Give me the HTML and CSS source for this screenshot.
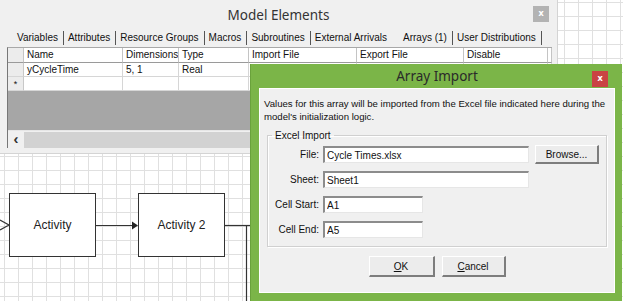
FILE: index.html
```html
<!DOCTYPE html>
<html>
<head>
<meta charset="utf-8">
<link rel="stylesheet" href="styles.css">
<title>Model Elements - Array Import</title>
</head>
<body>
<div class="desk">

  <!-- flowchart behind the windows -->
  <svg class="flow" width="623" height="301" viewBox="0 0 623 301">
    <path d="M0 220 L9 225 L0 230" fill="none" stroke="#333" stroke-width="1.2"/>
    <line x1="96" y1="225.5" x2="133" y2="225.5" stroke="#333" stroke-width="1.2"/>
    <polygon points="132,221.5 138,225.5 132,229.5" fill="#222"/>
    <line x1="224" y1="225.5" x2="250" y2="225.5" stroke="#333" stroke-width="1.2"/>
    <line x1="246.5" y1="225" x2="246.5" y2="301" stroke="#333" stroke-width="1.2"/>
  </svg>
  <div class="node node-a">Activity</div>
  <div class="node node-b">Activity 2</div>

  <!-- Model Elements window -->
  <section class="win model">
    <header class="win-title">
      <span>Model Elements</span>
      <span class="close-btn grey">x</span>
    </header>
    <nav class="tabs">
      <span class="tab">Variables</span><span class="sep"></span>
      <span class="tab">Attributes</span><span class="sep"></span>
      <span class="tab">Resource Groups</span><span class="sep"></span>
      <span class="tab">Macros</span><span class="sep"></span>
      <span class="tab">Subroutines</span><span class="sep"></span>
      <span class="tab">External Arrivals</span>
      <span class="tab active">Arrays (1)</span><span class="sep"></span>
      <span class="tab">User Distributions</span><span class="sep"></span>
    </nav>
    <div class="table">
      <div class="row head">
        <span class="rh"></span><span>Name</span><span>Dimensions</span><span>Type</span><span>Import File</span><span>Export File</span><span>Disable</span><span></span>
      </div>
      <div class="row">
        <span class="rh"></span><span>yCycleTime</span><span>5, 1</span><span>Real</span><span></span><span></span><span></span><span></span>
      </div>
      <div class="row">
        <span class="rh">*</span><span></span><span></span><span></span><span></span><span></span><span></span><span></span>
      </div>
      <div class="table-empty"></div>
      <div class="hscroll">
        <span class="scroll-btn">&lsaquo;</span>
        <span class="scroll-track"></span>
      </div>
    </div>
  </section>

  <!-- Array Import dialog -->
  <section class="dlg">
    <header class="dlg-title">
      <span>Array Import</span>
      <span class="close-btn red">x</span>
    </header>
    <div class="dlg-body">
      <p class="intro">Values for this array will be imported from the Excel file indicated here during the model's initialization logic.</p>
      <fieldset class="group">
        <legend>Excel Import</legend>
        <div class="fields">
          <label>File:</label>
          <input class="wide" type="text" value="Cycle Times.xlsx" readonly>
          <button class="btn browse">Browse...</button>

          <label>Sheet:</label>
          <input class="wide" type="text" value="Sheet1" readonly>
          <span></span>

          <label>Cell Start:</label>
          <input class="short" type="text" value="A1" readonly>
          <span></span>

          <label>Cell End:</label>
          <input class="short" type="text" value="A5" readonly>
          <span></span>
        </div>
      </fieldset>
      <div class="actions">
        <button class="btn main"><u>O</u>K</button>
        <button class="btn main"><u>C</u>ancel</button>
      </div>
    </div>
  </section>

</div>
</body>
</html>
```

FILE: styles.css
```css
html, body {
  margin: 0;
  padding: 0;
}

body {
  font-family: "Liberation Sans", Arial, sans-serif;
  font-size: 10px;
  color: #111;
}

.desk {
  position: relative;
  width: 623px;
  height: 301px;
  overflow: hidden;
  background-color: #fff;
  background-image:
    linear-gradient(to right, #e0e0e0 1px, transparent 1px),
    linear-gradient(to bottom, #e0e0e0 1px, transparent 1px);
  background-size: 14px 14px;
  background-position: 4px 2px;
}

/* flowchart */
.flow {
  position: absolute;
  left: 0;
  top: 0;
}

.node {
  position: absolute;
  top: 193px;
  width: 85px;
  height: 62px;
  border: 1px solid #333;
  background: #fff;
  display: flex;
  align-items: center;
  justify-content: center;
  font-size: 12px;
  color: #222;
}

.node-a { left: 9px; }
.node-b { left: 138px; }

/* shared window bits */
.close-btn {
  position: absolute;
  width: 16px;
  height: 16px;
  line-height: 14px;
  text-align: center;
  color: #fff;
  font-size: 9px;
  font-weight: bold;
}

.close-btn.grey { background: #b3b3b3; right: 8px; top: 6px; }
.close-btn.red { background: #c94343; right: 7px; top: 7px; }

/* Model Elements */
.win.model {
  position: absolute;
  left: 0;
  top: 0;
  width: 557px;
  height: 153px;
  background: #f0f0f0;
  border-right: 1px solid #d4d4d4;
  border-bottom: 1px solid #d4d4d4;
}

.win-title {
  position: relative;
  height: 29px;
  display: flex;
  align-items: center;
  justify-content: center;
  font-family: "Noto Sans", sans-serif;
  font-size: 13.5px;
  color: #333;
}

.tabs {
  display: flex;
  align-items: center;
  height: 18px;
  padding-left: 13px;
  white-space: nowrap;
}

.tab {
  flex-shrink: 0;
  padding: 0 5px 0 4px;
  font-size: 10px;
  line-height: 18px;
}

.tab.active {
  padding: 0 5px 0 11px;
}

.sep {
  flex-shrink: 0;
  width: 1px;
  height: 14px;
  background: #555;
}

.table {
  margin-left: 7px;
  width: 543px;
  height: 100px;
  border-left: 1px solid #777;
  border-top: 1px solid #a8a8a8;
  border-right: 1px solid #a8a8a8;
  display: flex;
  flex-direction: column;
}

.row {
  display: grid;
  grid-template-columns: 16px 99px 56px 70px 108px 107px 84px 1fr;
  height: 14px;
  background: #fff;
}

.row > span {
  border-right: 1px solid #d6d6d6;
  border-bottom: 1px solid #d6d6d6;
  padding-left: 3px;
  line-height: 14px;
  white-space: nowrap;
  overflow: hidden;
}

.row.head {
  height: 15px;
  background: #fff;
}

.row.head > span {
  border-bottom-color: #9a9a9a;
  border-right-color: #c4c4c4;
  line-height: 14px;
}

.row > .rh {
  background: #ececec;
  border-right-color: #c8c8c8;
  padding-left: 0;
  text-align: center;
  font-size: 9px;
}

.table-empty {
  height: 39px;
  background: #a6a6a6;
  border-bottom: 1px solid #e6e6e6;
}

.hscroll {
  display: flex;
  height: 16px;
  background: #f0f0f0;
  padding-top: 1px;
}

.scroll-btn {
  width: 16px;
  text-align: center;
  font-size: 15px;
  line-height: 13px;
  font-weight: bold;
  color: #333;
}

.scroll-track {
  flex: 1;
  background: #d2d2d2;
}

/* Array Import dialog */
.dlg {
  position: absolute;
  left: 250px;
  top: 64px;
  width: 372px;
  height: 237px;
  background: #7bb548;
  display: flex;
  flex-direction: column;
  padding: 0 7px 8px 8px;
  box-sizing: border-box;
  border-left: 1px solid #6aa23c;
}

.dlg-title {
  position: relative;
  height: 24px;
  display: flex;
  align-items: center;
  justify-content: center;
  font-family: "Noto Sans", sans-serif;
  font-size: 13.5px;
  color: #2a2a2a;
}

.dlg-body {
  flex: 1;
  background: #f0f0f0;
  border: 1px solid #fff;
  padding: 8px 7px 0 7px;
  display: flex;
  flex-direction: column;
}

.intro {
  margin: 0 0 0 -3px;
  font-size: 9.6px;
  line-height: 13px;
}

.group {
  margin: 7px 0 0 0;
  padding: 5px 0 10px 0;
  height: 117px;
  box-sizing: border-box;
  border: 1px solid #d0d0d0;
  box-shadow: inset 1px 1px 0 #fff, 1px 1px 0 #fff;
}

.group legend {
  margin-left: 4px;
  padding: 0 3px;
  font-size: 10px;
}

.fields {
  display: grid;
  grid-template-columns: 51px 206px 64px;
  grid-auto-rows: 17px;
  row-gap: 8px;
  column-gap: 4px;
  align-items: center;
}

.fields label {
  text-align: right;
  font-size: 10px;
}

.fields input {
  height: 17px;
  box-sizing: border-box;
  margin: 0;
  padding: 0 2px;
  font-family: "Liberation Sans", Arial, sans-serif;
  font-size: 10px;
  color: #111;
  background: #fff;
  border-top: 2px solid #8c8c8c;
  border-left: 2px solid #8c8c8c;
  border-right: 1px solid #e6e6e6;
  border-bottom: 1px solid #e6e6e6;
  outline: none;
}

.fields input.wide { width: 206px; }
.fields input.short { width: 100px; }

.btn {
  margin: 0;
  padding: 0;
  font-family: "Liberation Sans", Arial, sans-serif;
  font-size: 10px;
  color: #111;
  background: #ececec;
  border-top: 1px solid #fff;
  border-left: 1px solid #fff;
  border-right: 2px solid #7d7d7d;
  border-bottom: 2px solid #7d7d7d;
  box-sizing: border-box;
}

.btn.browse {
  width: 64px;
  height: 19px;
  margin-left: 2px;
}

.actions {
  display: flex;
  justify-content: center;
  gap: 7px;
  margin-top: 9px;
}

.btn.main {
  width: 66px;
  height: 21px;
}

.btn.main + .btn.main {
  width: 64px;
}
```
